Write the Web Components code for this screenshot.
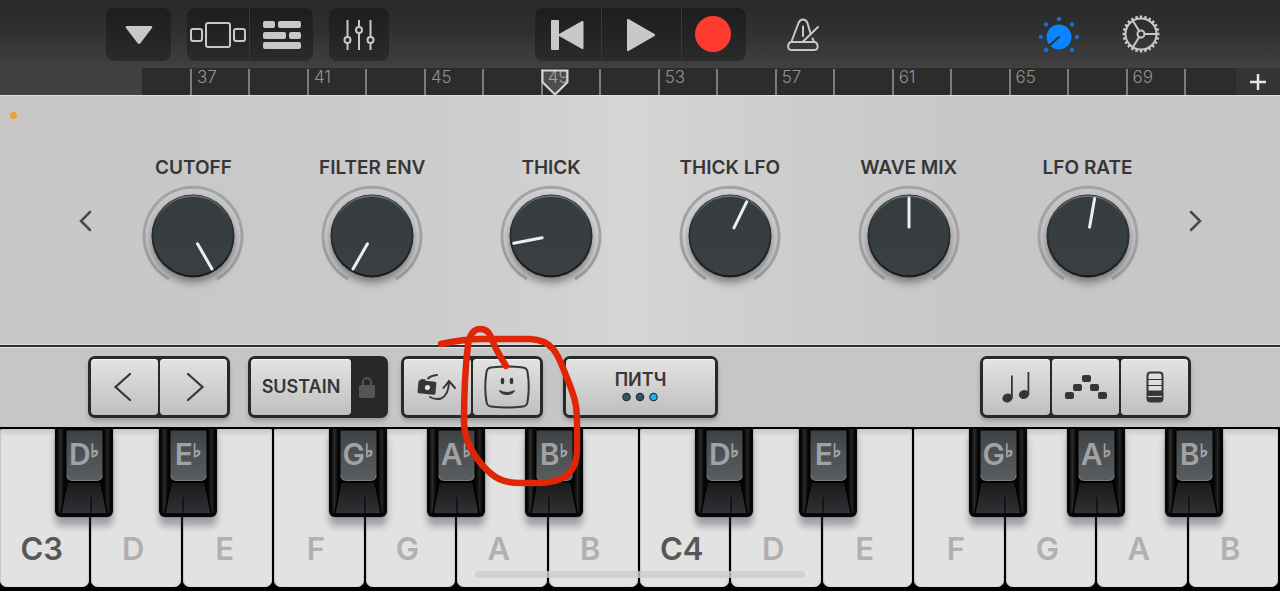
<!DOCTYPE html>
<html lang="en">
<head>
<meta charset="utf-8">
<meta name="viewport" content="width=device-width, initial-scale=1">
<title>Synth keyboard</title>
<style>
html, body { margin: 0; height: 100%; background: #000; }
body { font-family: Inter, "Liberation Sans", sans-serif; }
</style>
</head>
<body>
<synth-app></synth-app>
<script>
const RESET = `
*, *::before, *::after { box-sizing: border-box; }
button { margin: 0; padding: 0; border: 0; background: none; color: inherit; font: inherit; cursor: pointer; display: flex; align-items: center; justify-content: center; }
svg { display: block; overflow: visible; flex: none; }
`;

function define(name, render, ready) {
  customElements.define(name, class extends HTMLElement {
    connectedCallback() {
      if (this.shadowRoot) return;
      const root = this.attachShadow({ mode: "open" });
      const template = document.createElement("template");
      template.innerHTML = render(this);
      root.append(template.content.cloneNode(true));
      if (ready) ready(this, root);
    }
  });
}

/* Dark pill holding one or more toolbar buttons */
define("tool-group", () => `
<style>${RESET}
:host { display: flex; height: 53px; border-radius: 8px; overflow: hidden; background: linear-gradient(#1d1d1d, #2b2b2b); }
::slotted(tool-button:not(:first-child)) { border-left: 1px solid #383838; }
</style><slot></slot>`);

define("tool-button", el => `
<style>${RESET}
:host { display: flex; box-sizing: border-box; height: 53px; color: #c8c8c8; }
button { width: 100%; height: 100%; }
</style>
<button type="button" aria-label="${el.getAttribute("label")}"><slot></slot></button>`);

define("top-bar", () => {
  const ticks = [];
  for (let i = 0; i < 24; i++) {
    const a = i * 15 * Math.PI / 180;
    const c = Math.cos(a), s = Math.sin(a);
    ticks.push(`M${(15.5 * c).toFixed(2)} ${(15.5 * s).toFixed(2)}L${(18.5 * c).toFixed(2)} ${(18.5 * s).toFixed(2)}`);
  }
  return `
<style>${RESET}
:host { display: grid; grid-template-columns: 1fr auto 1fr; height: 68px; padding: 8px 0 7px; background: linear-gradient(#292929, #303030 45%, #414141); }
.left { display: flex; padding-left: 106px; gap: 16px; }
.right { display: flex; padding: 0 118px 0 36px; }
.push { margin-left: auto; margin-right: 40px; }
.w42 { width: 42px; } .w60 { width: 60px; } .w62 { width: 62px; } .w64 { width: 64px; } .w65 { width: 65px; } .w66 { width: 66px; } .w80 { width: 80px; }
</style>
<div class="left">
  <tool-group><tool-button class="w65" label="Songs"><svg width="28" height="20" viewBox="0 0 28 20"><path d="M2 1h24q2 0 1 2L15.500 18q-1.500 2-3 0L1 3q-1-2 1-2z" fill="currentColor"/></svg></tool-button></tool-group>
  <tool-group>
    <tool-button class="w62" label="Instruments"><svg width="56" height="26" viewBox="0 0 56 26" fill="none" stroke="currentColor" stroke-width="2"><rect x="16" y="1" width="24" height="24" rx="2"/><rect x="1" y="7" width="11" height="12" rx="2"/><rect x="44" y="7" width="11" height="12" rx="2"/></svg></tool-button>
    <tool-button class="w64" label="Tracks"><svg width="38" height="30" viewBox="0 0 38 30" fill="currentColor"><rect y="1" width="12" height="7" rx="2"/><rect x="15" y="1" width="23" height="7" rx="2"/><rect y="12" width="23" height="7" rx="2"/><rect x="26" y="12" width="12" height="7" rx="2"/><rect y="22" width="38" height="7" rx="2"/></svg></tool-button>
  </tool-group>
  <tool-group><tool-button class="w60" label="Mixer"><svg width="32" height="30" viewBox="0 0 32 30" fill="none" stroke="currentColor" stroke-width="2"><path d="M4.500 0v17M4.500 23v7M16 0v7M16 13v17M27.500 0v17M27.500 23v7"/><circle cx="4.500" cy="20" r="3"/><circle cx="16" cy="10" r="3"/><circle cx="27.500" cy="20" r="3"/></svg></tool-button></tool-group>
</div>
<tool-group>
  <tool-button class="w66" label="Go to start"><svg width="36" height="32" viewBox="0 0 36 32" fill="currentColor"><rect x="1" y="1" width="8" height="30" rx="1"/><path d="M32 2q1.500-.5 1.500 1v26q0 1.500-1.500 1L9 17q-1.500-1 0-2z"/></svg></tool-button>
  <tool-button class="w80" label="Play"><svg width="30" height="34" viewBox="0 0 30 34" fill="currentColor"><path d="M1 2q0-1.500 1.500-1L28.500 16q1.500 1 0 2L2.500 33Q1 33.500 1 32z"/></svg></tool-button>
  <tool-button class="w65" label="Record"><svg width="38" height="38" viewBox="0 0 38 38"><circle cx="18" cy="18" r="18" fill="#ff3b30"/></svg></tool-button>
</tool-group>
<div class="right">
  <tool-button class="w42" label="Metronome"><svg width="34" height="34" viewBox="0 0 34 34" fill="none" stroke="currentColor" stroke-width="2" stroke-linecap="round" stroke-linejoin="round"><path d="M24.500 15.500 21.500 5Q20 1.500 17 1.500T12.500 5L5.500 23.500M26.500 20.500 28 24M17 8.500V18M32 9 16.500 24"/><path d="M5.500 24h23q2 0 3 3 .8 5-3 5h-23q-4 0-3.200-5 .8-3 3.200-3z"/></svg></tool-button>
  <tool-button class="w42 push" label="Track controls"><svg width="42" height="38" viewBox="-21 -21 42 38" fill="#0a84ff"><circle cx="0" cy="0" r="12.500"/><path d="M0 0-9 8" stroke="#2b2f38" stroke-width="2" stroke-linecap="round"/><g fill="#176fd0"><circle cx="0" cy="-18" r="2.200"/><circle cx="-13" cy="-12.500" r="2.200"/><circle cx="13" cy="-12.500" r="2.200"/><circle cx="-18" cy="0" r="2.200"/><circle cx="18" cy="0" r="2.200"/><circle cx="-13" cy="13" r="2.200"/><circle cx="13" cy="13" r="2.200"/></g></svg></tool-button>
  <tool-button class="w42" label="Settings"><svg width="38" height="38" viewBox="-19 -18 38 38" fill="none" stroke="currentColor" stroke-width="2"><circle r="15.500"/><path stroke-width="2.400" d="${ticks.join("")}"/><circle r="3.500"/><path d="M3.500 0H15M-1.800-3-8-13M-1.800 3-8 13"/></svg></tool-button>
</div>`;
});

define("time-ruler", () => {
  let cells = "";
  for (let i = 0; i < 18; i++) {
    const text = i % 2 ? "" : 37 + i * 2;
    cells += `<div class="cell"><span>${text}</span>${i === 6 ? `<svg class="playhead" width="28" height="27" viewBox="0 0 28 27"><path d="M1.500 1.500H26.500V13L14 25.500 1.500 13z" fill="#fff" fill-opacity=".16" stroke="#d6d6d6" stroke-width="2"/></svg>` : ""}</div>`;
  }
  return `
<style>${RESET}
:host { display: grid; grid-template-columns: 142px 1fr 44px; height: 27px; background: #414141; }
.scale { display: grid; grid-template-columns: 48px repeat(17, 1fr) 52px; background: #2c2c2c; }
.cell { position: relative; margin-top: 1px; border-left: 2px solid #7c7c7c; padding-left: 5px; font-size: 17px; line-height: 16px; font-weight: 300; color: #929292; }
.playhead { position: absolute; left: -2px; top: 0; }
button { background: #343434; color: #e6e6e6; }
</style>
<div></div>
<div class="scale"><i></i>${cells}</div>
<button type="button" aria-label="Add section"><svg width="16" height="16" viewBox="0 0 16 16" stroke="currentColor" stroke-width="2.500"><path d="M0 8h16M8 0v16"/></svg></button>`;
});

define("rotary-knob", el => `
<style>${RESET}
:host { display: flex; flex-direction: column; align-items: center; gap: 3px; }
label { font-size: 19px; line-height: 24px; font-weight: 600; color: #363636; white-space: nowrap; }
.dial { position: relative; width: 104px; height: 104px; }
input { position: absolute; inset: 0; width: 100%; height: 100%; margin: 0; opacity: 0; cursor: pointer; }
.disc { filter: drop-shadow(0 5px 4px rgba(0,0,0,.4)); }
</style>
<label for="k">${el.getAttribute("label")}</label>
<div class="dial">
<svg width="104" height="104" viewBox="-52 -53 104 104">
<defs><linearGradient id="rim" x1="0" y1="0" x2="0" y2="1"><stop offset="0" stop-color="#70767a"/><stop offset=".3" stop-color="#353b3f"/><stop offset="1" stop-color="#171a1c"/></linearGradient>
<linearGradient id="face" x1="0" y1="0" x2="0" y2="1"><stop offset="0" stop-color="#353c40"/><stop offset="1" stop-color="#393f43"/></linearGradient></defs>
<path d="M-24 43A49 49 0 1 1 24 43" fill="none" stroke="#a3a3a3" stroke-width="3"/>
<circle class="disc" r="41.500" fill="#202426"/>
<circle r="40" fill="url(#face)" stroke="url(#rim)" stroke-width="1.500"/>
<path d="M0-9V-38" transform="rotate(${el.getAttribute("angle")})" stroke="#eceff1" stroke-width="3" stroke-linecap="round"/>
</svg>
<input id="k" type="range" min="0" max="100" value="${el.getAttribute("value")}">
</div>`);

define("knob-panel", () => `
<style>${RESET}
:host { position: relative; display: grid; grid-template-columns: 34px 1fr 34px; gap: 2px; align-items: center; min-height: 230px; padding: 0 67px 0 68px; border-top: 1px solid #dedede; background: linear-gradient(90deg, #c7c7c7, #c9c9c9 24%, #cfcfcf 40%, #d5d5d5 49%, #cecece 60%, #c7c7c7 76%, #c7c7c7); }
.knobs { display: grid; grid-template-columns: repeat(6, 1fr); padding-top: 2px; }
button { height: 44px; color: #4a4a4a; }
.dot { position: absolute; left: 10px; top: 16px; width: 7px; height: 7px; border-radius: 50%; background: #f0a030; }
</style>
<i class="dot"></i>
<button type="button" aria-label="Previous controls"><svg width="12" height="20" viewBox="0 0 12 20" fill="none" stroke="currentColor" stroke-width="2.500" stroke-linecap="round"><path d="M11 1 2 10l9 9"/></svg></button>
<div class="knobs">
<rotary-knob label="CUTOFF" angle="150" value="100"></rotary-knob>
<rotary-knob label="FILTER ENV" angle="210" value="0"></rotary-knob>
<rotary-knob label="THICK" angle="259" value="16"></rotary-knob>
<rotary-knob label="THICK LFO" angle="26" value="59"></rotary-knob>
<rotary-knob label="WAVE MIX" angle="0" value="50"></rotary-knob>
<rotary-knob label="LFO RATE" angle="10" value="53"></rotary-knob>
</div>
<button type="button" aria-label="Next controls"><svg width="12" height="20" viewBox="0 0 12 20" fill="none" stroke="currentColor" stroke-width="2.500" stroke-linecap="round"><path d="M1 1 10 10l-9 9"/></svg></button>`);

/* Raised light buttons inside a dark frame */
define("pad-group", () => `
<style>${RESET}
:host { display: flex; gap: 2px; height: 62px; padding: 3px; border-radius: 7px; background: #282828; box-shadow: 0 3px 4px rgba(0,0,0,.22); }
</style><slot></slot>`);

define("pad-button", el => `
<style>${RESET}
:host { display: flex; width: 67px; color: #363636; }
:host([dark]) { width: 32px; color: #555; }
:host([wide]) { width: 100px; }
:host([xwide]) { width: 149px; }
button { width: 100%; border-radius: 4px; background: linear-gradient(#e3e3e3, #bfbfbf); box-shadow: inset 0 1px 0 #f2f2f2; font-size: 18px; line-height: 20px; font-weight: 600; }
:host([dark]) button { background: none; box-shadow: none; }
</style>
<button type="button" ${el.hasAttribute("label") ? `aria-label="${el.getAttribute("label")}"` : ""}><slot></slot></button>`);

define("control-strip", () => `
<style>${RESET}
:host { position: relative; display: flex; align-items: flex-start; height: 84px; padding: 9px 89px 0 88px; border-top: 2px solid #2d2d2d; border-bottom: 2px solid #000; background: #c6c6c6; box-shadow: inset 0 1px 0 #e6e6e6, 0 -1px 0 #dedede; }
.g18 { margin-left: 18px; } .g13 { margin-left: 13px; } .g20 { margin-left: 20px; }
.end { margin-left: auto; }
.pitch { display: flex; flex-direction: column; align-items: center; gap: 2px; margin-bottom: 2px; }
</style>
<pad-group>
  <pad-button label="Octave down"><svg width="22" height="30" viewBox="0 0 22 30" fill="none" stroke="currentColor" stroke-width="2.200" stroke-linecap="round"><path d="M16 2 1.500 15 16 28"/></svg></pad-button>
  <pad-button label="Octave up"><svg width="18" height="30" viewBox="0 0 18 30" fill="none" stroke="currentColor" stroke-width="2.200" stroke-linecap="round"><path d="M3 2l14.500 13L3 28"/></svg></pad-button>
</pad-group>
<pad-group class="g18">
  <pad-button wide>SUSTAIN</pad-button>
  <pad-button dark label="Lock sustain"><svg width="20" height="22" viewBox="0 0 20 22"><path d="M4 10V6.500a4 4.500 0 0 1 8 0V10" fill="none" stroke="currentColor" stroke-width="2"/><rect y="9" width="16" height="13" rx="1.500" fill="currentColor"/></svg></pad-button>
</pad-group>
<pad-group class="g13">
  <pad-button label="Flip camera"><svg width="40" height="26" viewBox="0 0 40 26" fill="none" stroke="currentColor" stroke-width="2" stroke-linecap="round"><g transform="rotate(5 9 13)" stroke="none"><rect x="0" y="7" width="18" height="13" rx="1.500" fill="currentColor"/><rect x="2" y="5.500" width="5" height="3" rx="1" fill="currentColor"/><circle cx="9.500" cy="13.500" r="2.600" fill="#e4e4e4"/></g><path d="M10 4.500Q13 1.500 19 1M12 23q5 3 11 1.500 7.500-3 8-16.500M25.500 14l5.500-7 6 7"/></svg></pad-button>
  <pad-button label="Face control"><svg width="46" height="44" viewBox="0 0 46 44" fill="none" stroke="currentColor" stroke-width="2"><path d="M7 2.500Q23 .5 39 2.500 43 3 43.500 7 46 22 43.500 37 43 41 39 41.500 23 43.500 7 41.500 3 41 2.500 37 0 22 2.500 7 3 3 7 2.500z"/><ellipse cx="18.500" cy="16" rx="1.800" ry="3.200" fill="currentColor" stroke="none"/><ellipse cx="27.500" cy="16" rx="1.800" ry="3.200" fill="currentColor" stroke="none"/><path d="M15.500 25.500Q23 29.500 30.500 25.500 29 29.500 23 29.500t-7.500-4z" fill="currentColor" stroke-width="1" stroke-linejoin="round"/></svg></pad-button>
</pad-group>
<pad-group class="g20">
  <pad-button xwide><span class="pitch"><span>ПИТЧ</span><svg width="36" height="10" viewBox="0 0 36 10" stroke="#26343c" stroke-width="1.200"><circle cx="4.500" cy="5" r="3.700" fill="#2f5567"/><circle cx="18" cy="5" r="3.700" fill="#2f5567"/><circle cx="31.500" cy="5" r="3.700" fill="#1fb0f5"/></svg></span></pad-button>
</pad-group>
<pad-group class="end">
  <pad-button label="Keyboard layout"><svg width="30" height="32" viewBox="0 0 30 32" fill="currentColor"><ellipse cx="5.500" cy="27" rx="5.200" ry="4.300" transform="rotate(-15 5.500 27)"/><ellipse cx="22" cy="23.500" rx="5.200" ry="4.300" transform="rotate(-15 22 23.500)"/><path d="M9 4.500h1.800V27H9zM25.500 1h1.800v23h-1.800z"/></svg></pad-button>
  <pad-button label="Arpeggiator"><svg width="42" height="26" viewBox="0 0 42 26" fill="currentColor"><rect x="0" y="18" width="9" height="7" rx="2"/><rect x="8" y="10" width="9" height="7" rx="2"/><rect x="17" y="1" width="9" height="7" rx="2"/><rect x="25" y="10" width="9" height="7" rx="2"/><rect x="33" y="18" width="9" height="7" rx="2"/></svg></pad-button>
  <pad-button label="Scale"><svg width="18" height="32" viewBox="0 0 18 32" fill="none" stroke="currentColor"><rect x="1.500" y="1.500" width="15" height="29" rx="3" stroke-width="2" fill="#dedede"/><path d="M2 8.500h14M2 14.500h14" stroke-width="1.200"/><path d="M2 19.500h14V29q-1 1-3 1H5q-2 0-3-1z" fill="currentColor" stroke="none"/><path d="M2 25.500h14" stroke="#ccc" stroke-width="1.200"/></svg></pad-button>
</pad-group>`);

define("white-key", el => `
<style>${RESET}
:host { flex: 1; display: flex; min-width: 0; padding: 0 2px 4px 0; }
button { width: 100%; align-items: flex-end; padding: 0 6px 20px 0; border-radius: 2px 2px 7px 7px; background: linear-gradient(#c8c8c8, #e2e2e2 8px); box-shadow: inset 1px 0 1px #c4c4c4, inset -1px 0 1px #cecece; font-size: 31px; line-height: 36px; font-weight: 600; color: #b0b0b0; }
:host([root]) button { color: #575757; }
</style>
<button type="button"><slot></slot></button>`);

/* "at" is the key's centre and "slit" its crack line, on an octave 640 units wide */
define("black-key", el => `
<style>${RESET}
:host { position: absolute; top: 0; width: 58px; height: 88px; margin-left: -29px; }
button { position: relative; width: 58px; height: 88px; align-items: flex-start; border-radius: 0 0 6px 6px; background: #060606; box-shadow: 0 9px 7px rgba(50,45,65,.36), 0 0 2px rgba(0,0,0,.5); }
svg { position: absolute; inset: 0; }
.name { position: relative; display: flex; align-items: flex-start; justify-content: center; padding-top: 7px; font-size: 30px; line-height: 36px; font-weight: 600; color: #a0a2a3; }
sup { margin-top: 5px; font-family: "DejaVu Sans", sans-serif; font-size: 18px; line-height: 20px; font-weight: 700; vertical-align: baseline; -webkit-text-stroke: 1px currentColor; }
</style>
<button type="button">
<svg width="58" height="88" viewBox="0 0 58 88">
<defs><linearGradient id="side"><stop offset="0" stop-color="#000"/><stop offset=".06" stop-color="#2c2c2c"/><stop offset=".13" stop-color="#050505"/><stop offset=".87" stop-color="#050505"/><stop offset=".94" stop-color="#242424"/><stop offset="1" stop-color="#000"/></linearGradient>
<linearGradient id="cap" x1="0" y1="0" x2="0" y2="1"><stop offset="0" stop-color="#3d4144"/><stop offset=".4" stop-color="#4b4f52"/><stop offset="1" stop-color="#595d60"/></linearGradient>
<linearGradient id="front" x1="0" y1="0" x2="0" y2="1"><stop offset="0" stop-color="#18191a"/><stop offset="1" stop-color="#303235"/></linearGradient></defs>
<rect x="2" y="0" width="54" height="84" rx="3" fill="url(#side)"/>
<path d="M12 53h34l6 31q0 1-1 1H7q-1 0-1-1z" fill="url(#front)" stroke="#000" stroke-width="1.500"/>
<path d="M11 1h37v45q0 6-6 6H17q-6 0-6-6z" fill="url(#cap)" stroke="#000" stroke-width="1"/>
<path d="M12 46q0 5.500 6 5.500h23q6 0 6-5.500" fill="none" stroke="#7a7e81" stroke-width="1"/>
<path d="M${el.getAttribute("slit")} 68V88" stroke="#000" stroke-width="1"/>
</svg>
<span class="name"><slot></slot><sup>♭</sup></span>
</button>`, (el) => { el.style.left = el.getAttribute("at") / 640 * 100 + "%"; });

define("piano-octave", el => `
<style>${RESET}
:host { position: relative; flex: 1; display: flex; }
</style>
<white-key root>${el.getAttribute("root")}</white-key>
${["D", "E", "F", "G", "A", "B"].map(n => `<white-key>${n}</white-key>`).join("")}
<black-key at="84" slit="36">D</black-key>
<black-key at="188" slit="24">E</black-key>
<black-key at="358" slit="36">G</black-key>
<black-key at="456" slit="30">A</black-key>
<black-key at="554" slit="24">B</black-key>`);

define("piano-keys", () => `
<style>${RESET}
:host { position: relative; display: flex; height: 162px; background: #000; }
.home { position: absolute; left: 50%; bottom: 13px; width: 330px; height: 7px; margin-left: -165px; border-radius: 4px; background: rgba(205,205,205,.8); }
</style>
<piano-octave root="C3"></piano-octave><piano-octave root="C4"></piano-octave><i class="home"></i>`);

/* Freehand pen mark circling the face control */
define("pen-mark", () => `
<style>${RESET}
:host { position: absolute; left: 430px; bottom: 96px; pointer-events: none; }
</style>
<svg width="160" height="175" viewBox="430 320 160 175" fill="none" stroke="#e02607" stroke-width="6.500" stroke-linecap="round" stroke-linejoin="round"><path d="M441 344C460 340 468 339 480 339L530 339C556 340 559 359 567 378C577 402 577 410 577 425L577 452C576 474 562 483 537 483L520 483C503 483 494 478 483 466C469 450 464 436 464 421C464 396 465 370 468 345C470 333 474 329 480 329C487 329 490 333 493 342Q495 348 506 366"/></svg>`);

define("synth-app", () => `
<style>${RESET}
:host { position: relative; display: grid; grid-template-rows: auto auto 1fr auto auto; min-height: 100vh; overflow: hidden; }
</style>
<top-bar></top-bar>
<time-ruler></time-ruler>
<knob-panel></knob-panel>
<control-strip></control-strip>
<piano-keys></piano-keys>
<pen-mark></pen-mark>`);
</script>
</body>
</html>
